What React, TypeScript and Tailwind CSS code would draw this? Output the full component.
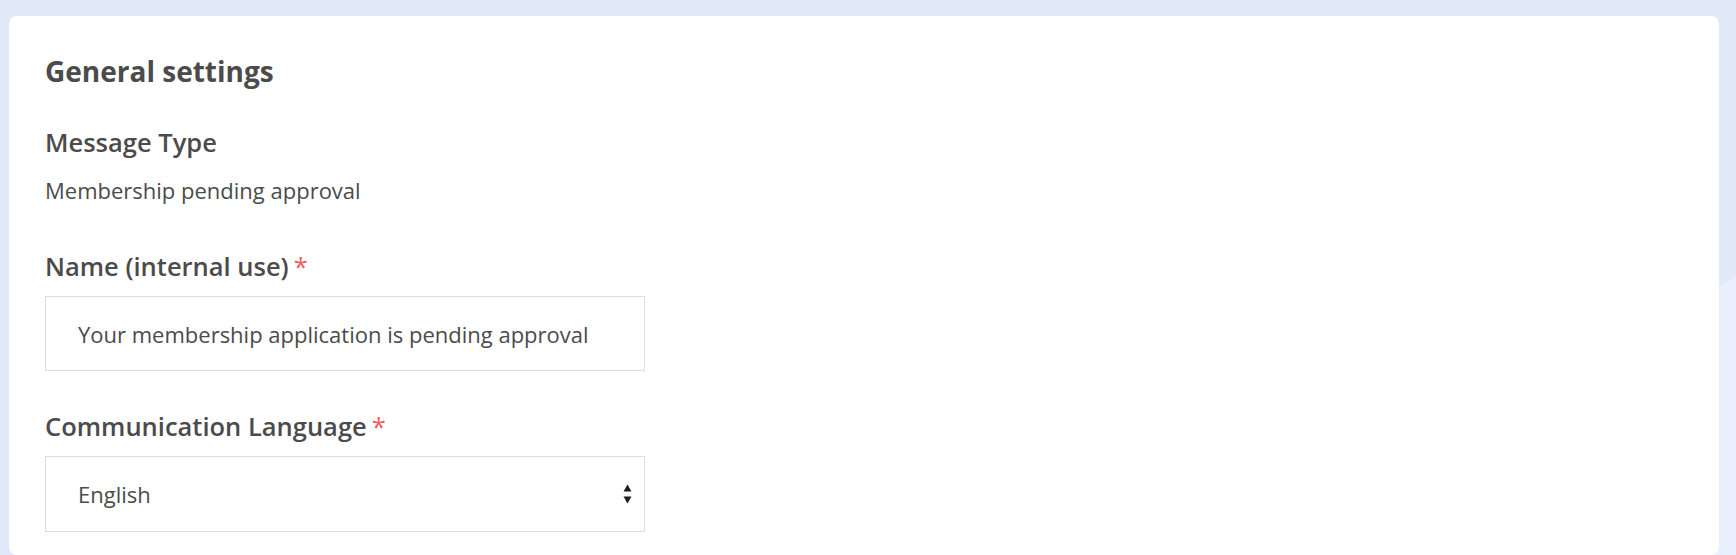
import React from "react";

function SelectArrows() {
  return (
    <svg width="9" height="21" viewBox="0 0 9 21" className="pointer-events-none absolute right-[13px] top-1/2 -translate-y-1/2">
      <path d="M4.5 1 L8.5 8 L0.5 8 Z" fill="#1f1f1f" />
      <path d="M0.5 13 L8.5 13 L4.5 20 Z" fill="#1f1f1f" />
    </svg>
  );
}

function FieldLabel({ text, required }: { text: string; required?: boolean }) {
  return (
    <div className="h-[30px] text-[25.5px] font-semibold leading-[30px] text-[#4b4b4b]">
      {text}
      {required && <span className="ml-[5px] font-normal text-[#f05a5a]">*</span>}
    </div>
  );
}

export default function App() {
  return (
    <div
      className="relative min-h-[555px] w-full overflow-hidden bg-[#e1e9f8]"
      style={{ fontFamily: "'Open Sans', 'Noto Sans', sans-serif" }}
    >
      {/* wave in the background, right side */}
      <svg className="absolute right-0 top-0 h-[555px] w-[120px]" viewBox="0 0 120 555" preserveAspectRatio="none">
        <path d="M0 340 C40 320 80 300 120 276 L120 555 L0 555 Z" fill="#e9effc" />
      </svg>

      <div className="relative ml-[9px] mr-[17px] mt-[16px] min-h-[539px] rounded-[8px] bg-white px-[36px] pt-[37px]">
        <h2 className="text-[28px] font-bold leading-[36px] text-[#4b4b4b]">General settings</h2>

        <div className="mt-[38px]">
          <FieldLabel text="Message Type" />
          <p className="mt-[19px] text-[22px] leading-[28px] text-[#4b4b4b]">Membership pending approval</p>
        </div>

        <div className="mt-[47px]">
          <FieldLabel text="Name (internal use)" required />
          <input
            type="text"
            defaultValue="Your membership application is pending approval"
            className="mt-[15px] block h-[75px] w-[600px] border border-[#d8deea] bg-white pl-[32px] text-[22px] text-[#4b4b4b] outline-none"
          />
        </div>

        <div className="mt-[40px]">
          <FieldLabel text="Communication Language" required />
          <div className="relative mt-[15px] w-[600px]">
            <select
              defaultValue="en"
              className="block h-[76px] w-full appearance-none border border-[#d8deea] bg-white pl-[32px] text-[22px] text-[#4b4b4b] outline-none"
            >
              <option value="en">English</option>
              <option value="fr">French</option>
              <option value="de">German</option>
            </select>
            <SelectArrows />
          </div>
        </div>
      </div>
    </div>
  );
}
